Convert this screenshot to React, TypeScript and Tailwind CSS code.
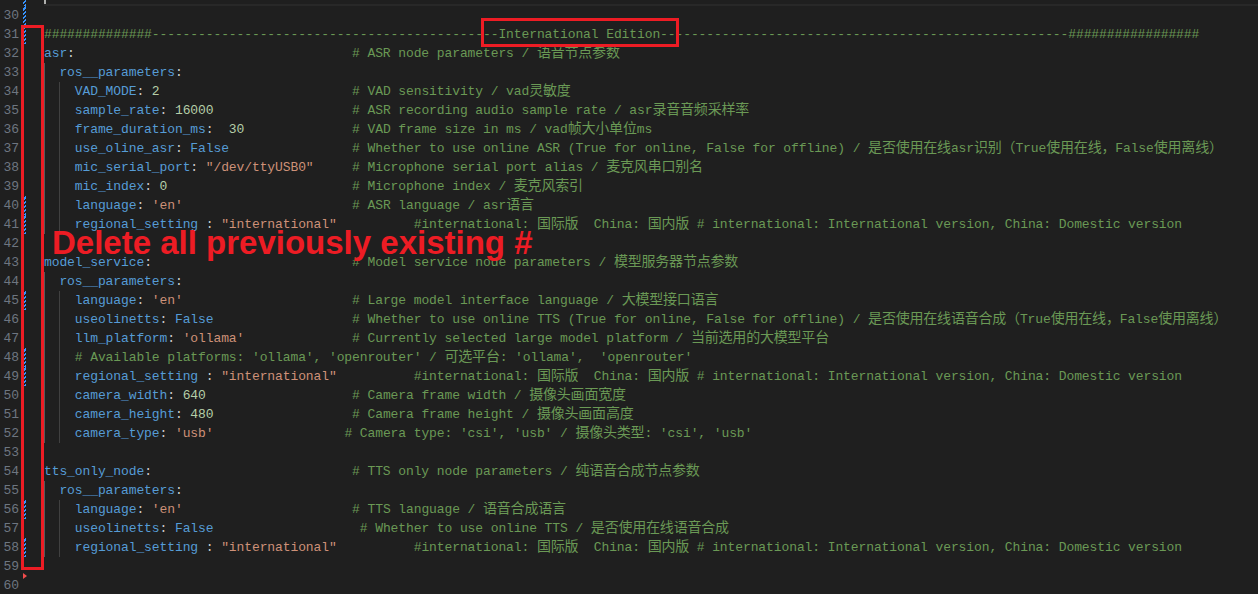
import React from "react";

type Tok = "k" | "p" | "s" | "n" | "b" | "c";
type Seg = [string, Tok];
type Line = {
    n: number;
    indent?: number;
    parts?: Seg[];
    col?: number;
    comment?: string;
    mod?: boolean;
    current?: boolean;
};

const tone: Record<Tok, string> = {
    k: "text-[#569cd6]",
    p: "text-[#cccccc]",
    s: "text-[#ce9178]",
    n: "text-[#b5cea8]",
    b: "text-[#569cd6]",
    c: "text-[#6a9955]",
};

const REGION = "#international: 国际版  China: 国内版 # international: International version, China: Domestic version";

const key = (name: string, sep = ": "): Seg[] => [
    [name, "k"],
    [sep, "p"],
];

const lines: Line[] = [
    { n: 29, mod: true, current: true },
    { n: 30, mod: true },
    {
        n: 31,
        mod: true,
        parts: [["#".repeat(14) + "-".repeat(45) + "International Edition" + "-".repeat(53) + "#".repeat(17), "c"]],
    },
    { n: 32, parts: [["asr", "k"], [":", "p"]], col: 40, comment: "# ASR node parameters / 语音节点参数" },
    { n: 33, indent: 2, parts: [["ros__parameters", "k"], [":", "p"]] },
    { n: 34, indent: 4, parts: [...key("VAD_MODE"), ["2", "n"]], col: 40, comment: "# VAD sensitivity / vad灵敏度" },
    {
        n: 35,
        indent: 4,
        parts: [...key("sample_rate"), ["16000", "n"]],
        col: 40,
        comment: "# ASR recording audio sample rate / asr录音音频采样率",
    },
    {
        n: 36,
        indent: 4,
        parts: [...key("frame_duration_ms", ":  "), ["30", "n"]],
        col: 40,
        comment: "# VAD frame size in ms / vad帧大小单位ms",
    },
    {
        n: 37,
        indent: 4,
        parts: [...key("use_oline_asr"), ["False", "b"]],
        col: 40,
        comment:
            "# Whether to use online ASR (True for online, False for offline) / 是否使用在线asr识别（True使用在线，False使用离线）",
    },
    {
        n: 38,
        indent: 4,
        parts: [...key("mic_serial_port"), ['"/dev/ttyUSB0"', "s"]],
        col: 40,
        comment: "# Microphone serial port alias / 麦克风串口别名",
    },
    { n: 39, indent: 4, parts: [...key("mic_index"), ["0", "n"]], col: 40, comment: "# Microphone index / 麦克风索引" },
    { n: 40, indent: 4, mod: true, parts: [...key("language"), ["'en'", "s"]], col: 40, comment: "# ASR language / asr语言" },
    {
        n: 41,
        indent: 4,
        mod: true,
        parts: [...key("regional_setting", " : "), ['"international"', "s"]],
        col: 48,
        comment: REGION,
    },
    { n: 42 },
    {
        n: 43,
        parts: [["model_service", "k"], [":", "p"]],
        col: 40,
        comment: "# Model service node parameters / 模型服务器节点参数",
    },
    { n: 44, indent: 2, parts: [["ros__parameters", "k"], [":", "p"]] },
    {
        n: 45,
        indent: 4,
        mod: true,
        parts: [...key("language"), ["'en'", "s"]],
        col: 40,
        comment: "# Large model interface language / 大模型接口语言",
    },
    {
        n: 46,
        indent: 4,
        parts: [...key("useolinetts"), ["False", "b"]],
        col: 40,
        comment:
            "# Whether to use online TTS (True for online, False for offline) / 是否使用在线语音合成（True使用在线，False使用离线）",
    },
    {
        n: 47,
        indent: 4,
        parts: [...key("llm_platform"), ["'ollama'", "s"]],
        col: 40,
        comment: "# Currently selected large model platform / 当前选用的大模型平台",
    },
    {
        n: 48,
        indent: 4,
        mod: true,
        col: 4,
        comment: "# Available platforms: 'ollama', 'openrouter' / 可选平台: 'ollama',  'openrouter'",
    },
    {
        n: 49,
        indent: 4,
        mod: true,
        parts: [...key("regional_setting", " : "), ['"international"', "s"]],
        col: 48,
        comment: REGION,
    },
    {
        n: 50,
        indent: 4,
        parts: [...key("camera_width"), ["640", "n"]],
        col: 40,
        comment: "# Camera frame width / 摄像头画面宽度",
    },
    {
        n: 51,
        indent: 4,
        parts: [...key("camera_height"), ["480", "n"]],
        col: 40,
        comment: "# Camera frame height / 摄像头画面高度",
    },
    {
        n: 52,
        indent: 4,
        parts: [...key("camera_type"), ["'usb'", "s"]],
        col: 39,
        comment: "# Camera type: 'csi', 'usb' / 摄像头类型: 'csi', 'usb'",
    },
    { n: 53 },
    {
        n: 54,
        parts: [["tts_only_node", "k"], [":", "p"]],
        col: 40,
        comment: "# TTS only node parameters / 纯语音合成节点参数",
    },
    { n: 55, indent: 2, parts: [["ros__parameters", "k"], [":", "p"]] },
    {
        n: 56,
        indent: 4,
        mod: true,
        parts: [...key("language"), ["'en'", "s"]],
        col: 40,
        comment: "# TTS language / 语音合成语言",
    },
    {
        n: 57,
        indent: 4,
        parts: [...key("useolinetts"), ["False", "b"]],
        col: 41,
        comment: "# Whether to use online TTS / 是否使用在线语音合成",
    },
    {
        n: 58,
        indent: 4,
        mod: true,
        parts: [...key("regional_setting", " : "), ['"international"', "s"]],
        col: 48,
        comment: REGION,
    },
    { n: 59 },
    { n: 60 },
];

// CJK runs get the wider fallback size, like the editor's font fallback
const mix = (t: string) =>
    t.split(/([\u3000-\u303f\u4e00-\u9fff\uff00-\uffef]+)/).map((s, i) =>
        i % 2 ? (
            <span key={i} className="text-[14px] tracking-[-0.2px]">
                {s}
            </span>
        ) : (
            s
        )
    );

function CodeLine({ line }: { line: Line }) {
    const indent = line.indent ?? 0;
    const parts = line.parts ?? [];
    const used = indent + parts.reduce((a, [t]) => a + t.length, 0);
    const gap = line.comment ? Math.max(0, (line.col ?? 40) - used) : 0;

    return (
        <div
            className={`relative flex-1 whitespace-pre ${line.current ? "border-y-2 border-[#282828]" : ""}`}
        >
            {line.current && <span className="absolute left-0 top-0 h-full w-[2px] bg-[#aeafad]" />}
            {Array.from({ length: indent / 2 }).map((_, i) => (
                <span
                    key={i}
                    className={`inline-block h-[19px] align-top ${
                        i === 0 ? "shadow-[inset_1px_0_0_#5a5a5a]" : "shadow-[inset_1px_0_0_#404040]"
                    }`}
                >
                    {"  "}
                </span>
            ))}
            {parts.map(([t, k], i) => (
                <span key={i} className={tone[k]}>
                    {mix(t)}
                </span>
            ))}
            {" ".repeat(gap)}
            {line.comment && <span className={tone.c}>{mix(line.comment)}</span>}
        </div>
    );
}

export default function App() {
    return (
        <div className="relative h-[594px] w-[1258px] overflow-hidden bg-[#1f1f1f] font-['Liberation_Mono','Noto_Sans_CJK_SC',monospace] text-[13px] leading-[19px] tracking-[-0.1px]">
            <div className="-mt-[13px] flex flex-col">
                {lines.map((line) => (
                    <div key={line.n} className="flex h-[19px]">
                        <div
                            className={`w-[19px] text-right ${line.current ? "text-[#cccccc]" : "text-[#6e7681]"}`}
                        >
                            {line.n}
                        </div>
                        <div className="relative w-[25px]">
                            {line.mod && (
                                <div className="absolute left-[4px] top-0 h-full w-[3px] bg-[repeating-linear-gradient(-45deg,#3794ff_0px,#3794ff_1.5px,transparent_1.5px,transparent_3px)]" />
                            )}
                            {line.n === 60 && (
                                <div className="absolute left-[4px] top-[-3px] h-0 w-0 border-y-[3px] border-l-[4px] border-y-transparent border-l-[#f14c4c]" />
                            )}
                        </div>
                        <CodeLine line={line} />
                    </div>
                ))}
            </div>

            {/* annotations drawn over the editor */}
            <div className="absolute left-[21px] top-[25px] h-[545px] w-[23px] border-[3px] border-[#ed1c24]" />
            <div className="absolute left-[481px] top-[18px] h-[29px] w-[198px] border-[3px] border-[#ed1c24]" />
            <div className="absolute left-[52px] top-[226px] font-['Liberation_Sans',Arial,sans-serif] text-[33px] font-bold leading-[33px] tracking-normal text-[#ed1c24]">
                Delete all previously existing #
            </div>
        </div>
    );
}
